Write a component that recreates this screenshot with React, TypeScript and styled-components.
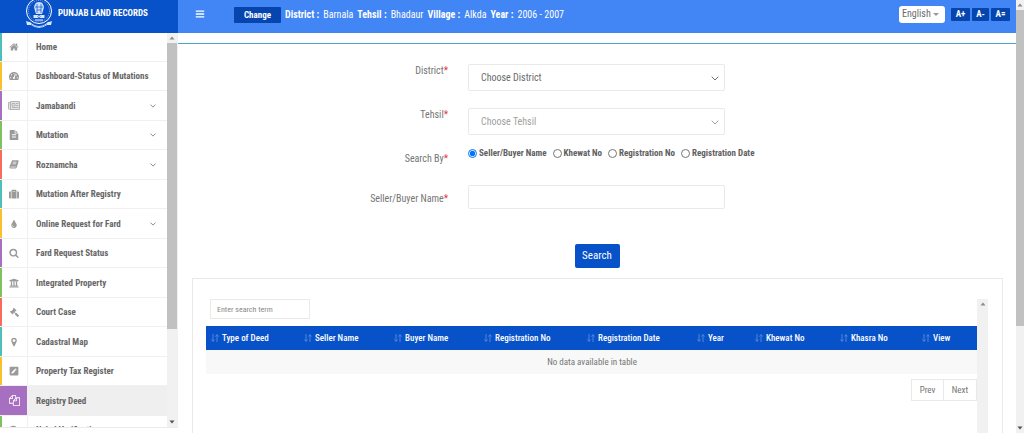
import React from "react";
import styled, { createGlobalStyle, css } from "styled-components";
import {
  FaTachometerAlt,
  FaSuitcase,
  FaTint,
  FaUniversity,
  FaGavel,
  FaPenSquare,
} from "react-icons/fa";

const GlobalStyle = createGlobalStyle`
  *, *::before, *::after { box-sizing: border-box; }
  body {
    margin: 0;
    background: #fff;
    color: #757575;
    font-family: "Roboto Condensed", "Liberation Sans Narrow", Roboto, sans-serif;
    font-size: 10px;
    line-height: 14px;
  }
  button, input, select { font: inherit; color: inherit; margin: 0; }
`;

const BLUE = "#0751c9";
const EDGES = ["#4dbfbb", "#fbc02d", "#a76fc0", "#7fc15e", "#f86c5b"];

const Shell = styled.div`
  display: flex;
  height: 100vh;
  overflow: hidden;
`;

const Sidebar = styled.aside`
  display: flex;
  flex-direction: column;
  flex: none;
  width: 178px;
  height: 100%;
  padding-bottom: 5px;
`;

const Brand = styled.div`
  display: flex;
  flex: none;
  align-items: center;
  gap: 5px;
  height: 33px;
  padding: 0 0 7px 25px;
  overflow: hidden;
  background: ${BLUE};
  color: #fff;
  font-size: 9px;
  font-weight: 700;
  white-space: nowrap;
`;

const Emblem = styled.svg`
  flex: none;
  width: 28px;
  height: 34px;
`;

const MenuArea = styled.div`
  display: flex;
  flex: 1;
  min-height: 0;
  border-right: 1px solid #f0f0f0;
  border-bottom: 1px solid #ebebeb;
`;

const Menu = styled.nav`
  flex: 1;
  overflow: hidden;
`;

const MenuLink = styled.a<{ $edge: string; $active?: boolean }>`
  display: flex;
  height: 29px;
  border-bottom: 1px solid #f0f0f0;
  color: #666;
  font-size: 9px;
  font-weight: 700;
  text-decoration: none;
  white-space: nowrap;
  background: ${(p) => (p.$active ? "#efefef" : "#fff")};

  &:nth-child(odd):not(:first-child) {
    height: 30px;
  }
  & > span:first-child {
    border-left: 2px solid ${(p) => p.$edge};
    ${(p) =>
      p.$active &&
      css`
        background: ${p.$edge};
        color: #fff;
      `}
  }
`;

const MenuIcon = styled.span`
  display: flex;
  flex: none;
  align-items: center;
  justify-content: center;
  width: 28px;
  padding-right: 1px;
  border-right: 1px solid #f0f0f0;
  color: #9a9a9a;
  font-size: 10px;
`;

const Gavel = styled(FaGavel)`
  transform: scaleX(-1);
`;

const MenuText = styled.span`
  flex: 1;
  align-self: center;
  padding-left: 8px;
`;

const Chevron = styled.svg`
  align-self: center;
  width: 6px;
  height: 6px;
  margin-right: 11px;
`;

const Track = styled.div<{ $w: number }>`
  display: flex;
  flex: none;
  flex-direction: column;
  align-items: center;
  width: ${(p) => p.$w}px;
  background: #f1f1f1;
`;

const Thumb = styled.div<{ $size: string }>`
  width: 100%;
  height: ${(p) => p.$size};
  background: #c1c1c1;
`;

const Arrow = styled.svg<{ $end?: boolean }>`
  flex: none;
  width: 6px;
  height: 10px;
  ${(p) => p.$end && "margin-top: auto; transform: rotate(180deg);"}
`;

const Main = styled.div`
  display: flex;
  flex: 1;
  flex-direction: column;
  min-width: 0;
`;

const Topbar = styled.header`
  display: flex;
  flex: none;
  align-items: center;
  height: 33px;
  padding: 0 6px 5px 17px;
  background: #4285f4;
  color: #fff;
`;

const IconButton = styled.button`
  display: flex;
  padding: 0;
  border: 0;
  background: none;
`;

const DarkButton = styled.button<{ $w: number }>`
  width: ${(p) => p.$w}px;
  height: 13px;
  padding: 0;
  border: 0;
  border-radius: 1px;
  background: #0645ae;
  color: #fff;
  font-size: 9px;
  font-weight: 700;
  line-height: 12px;
`;

const ChangeButton = styled(DarkButton)`
  height: 16px;
`;

const Place = styled.div`
  display: flex;
  flex: 1;
  align-items: center;
  gap: 4px;
  margin-left: 29px;
  padding-top: 2px;
  font-size: 10px;
  white-space: nowrap;
`;

const Language = styled.div`
  position: relative;
  width: 46px;
  height: 17px;
  margin-right: 6px;
  color: #6b6b6b;

  select {
    width: 100%;
    height: 100%;
    padding: 0 3px;
    border: 0;
    border-radius: 3px;
    background: #fff;
    appearance: none;
  }
  svg {
    position: absolute;
    top: 6px;
    right: 6px;
    width: 6px;
    height: 5px;
  }
`;

const TextSizes = styled.div`
  display: flex;
  gap: 2px;
`;

const Content = styled.main`
  flex: 1;
  min-height: 0;
  margin-top: 10px;
  overflow: hidden;
  border-top: 1px solid #4ba6cf;
`;

const Form = styled.form`
  padding-top: 20px;
`;

const Field = styled.div<{ $gap: number }>`
  display: grid;
  grid-template-columns: 270fr 257fr 271fr;
  column-gap: 20px;
  align-items: start;
  margin-bottom: ${(p) => p.$gap}px;
`;

const Caption = styled.label<{ $drop?: number }>`
  padding-top: ${(p) => p.$drop ?? 0}px;
  text-align: right;

  &::after {
    content: "*";
    color: #e53935;
  }
`;

const Select = styled.div<{ $muted?: boolean }>`
  position: relative;
  height: 27px;
  color: ${(p) => (p.$muted ? "#a0a0a0" : "#6b6b6b")};

  select {
    width: 100%;
    height: 100%;
    padding: 0 12px;
    border: 1px solid #e9e9e9;
    border-radius: 2px;
    background: #fff;
    appearance: none;
  }
  svg {
    position: absolute;
    top: 11px;
    right: 6px;
    width: 8px;
    height: 7px;
  }
`;

const Radios = styled.div`
  display: flex;
  grid-column: 2 / -1;
  gap: 6px;
  color: #5f5f5f;
  font-size: 9px;
  font-weight: 700;
  white-space: nowrap;

  label {
    display: flex;
    align-items: center;
    gap: 2px;
  }
  input {
    width: 9px;
    height: 9px;
  }
`;

const TextInput = styled.input`
  width: 100%;
  height: 24px;
  padding: 0 12px;
  border: 1px solid #e9e9e9;
  border-radius: 2px;
`;

const SearchButton = styled.button`
  display: block;
  width: 45px;
  height: 24px;
  margin: 35px auto 10px;
  padding: 0;
  border: 0;
  border-radius: 2px;
  background: ${BLUE};
  color: #fff;
  font-size: 11px;
`;

const Results = styled.section`
  display: flex;
  height: 400px;
  margin: 0 13px 0 14px;
  padding: 20px 14px 0 13px;
  border: 1px solid #e9e9e9;
`;

const ResultsBody = styled.div`
  flex: 1;
  min-width: 0;
`;

const Filter = styled.input`
  display: block;
  width: 100px;
  height: 20px;
  margin: 0 4px 7px;
  padding: 0 6px;
  border: 1px solid #e9e9e9;
  font-size: 8px;

  &::placeholder {
    color: #8a8a8a;
  }
`;

const Table = styled.table`
  width: 100%;
  border-collapse: collapse;
  table-layout: fixed;
  font-size: 9px;

  td {
    height: 24px;
    padding: 0;
    background: #f8f8f8;
    text-align: center;
  }
`;

const Th = styled.th<{ $w: number }>`
  width: ${(p) => p.$w}px;
  height: 24px;
  padding: 0 0 0 5px;
  background: ${BLUE};
  color: #fff;
  font-weight: 500;
  text-align: left;
  white-space: nowrap;

  svg {
    width: 8px;
    height: 8px;
    margin-right: 3px;
    vertical-align: -1px;
    opacity: 0.3;
  }
`;

const Pager = styled.div`
  display: flex;
  justify-content: flex-end;
  margin-top: 5px;

  button {
    width: 33px;
    height: 22px;
    padding: 0;
    border: 1px solid #e9e9e9;
    background: #fff;
    font-size: 9px;
  }
  button + button {
    width: 34px;
    margin-left: -1px;
  }
`;

const Glyph = ({ d, size = 10 }: { d: string; size?: number }) => (
  <svg viewBox="0 0 1792 1792" width={size} height={size} fill="currentColor" aria-hidden="true">
    <path d={d} />
  </svg>
);

const HOME =
  "M1472 992v480q0 26-19 45t-45 19h-384v-384h-256v384h-384q-26 0-45-19t-19-45v-480q0-1 .5-3t.5-3l575-474 575 474q1 2 1 6zm223-69l-62 74q-8 9-21 11h-3q-13 0-21-7l-692-577-692 577q-12 8-24 7-13-2-21-11l-62-74q-8-10-7-23.5t11-21.5l719-599q32-26 76-26t76 26l244 204v-195q0-14 9-23t23-9h192q14 0 23 9t9 23v408l219 182q10 8 11 21.5t-7 23.5z";
const FILE_TEXT =
  "M1596 476q14 14 28 36h-472v-472q22 14 36 28zm-476 164h544v1056q0 40-28 68t-68 28h-1344q-40 0-68-28t-28-68v-1600q0-40 28-68t68-28h800v544q0 40 28 68t68 28zm160 736v-64q0-14-9-23t-23-9h-704q-14 0-23 9t-9 23v64q0 14 9 23t23 9h704q14 0 23-9t9-23zm0-256v-64q0-14-9-23t-23-9h-704q-14 0-23 9t-9 23v64q0 14 9 23t23 9h704q14 0 23-9t9-23zm0-256v-64q0-14-9-23t-23-9h-704q-14 0-23 9t-9 23v64q0 14 9 23t23 9h704q14 0 23-9t9-23z";
const SEARCH =
  "M1216 832q0-185-131.5-316.5t-316.5-131.5-316.5 131.5-131.5 316.5 131.5 316.5 316.5 131.5 316.5-131.5 131.5-316.5zm512 832q0 52-38 90t-90 38q-54 0-90-38l-343-342q-179 124-399 124-143 0-273.5-55.5t-225-150-150-225-55.5-273.5 55.5-273.5 150-225 225-150 273.5-55.5 273.5 55.5 225 150 150 225 55.5 273.5q0 220-124 399l343 343q37 37 37 90z";
const MARKER =
  "M1152 640q0-106-75-181t-181-75-181 75-75 181 75 181 181 75 181-75 75-181zm256 0q0 109-33 179l-364 774q-16 33-47.5 52t-67.5 19-67.5-19-46.5-52l-365-774q-33-70-33-179 0-212 150-362t362-150 362 150 150 362z";
const FILES =
  "M1696 384q40 0 68 28t28 68v1216q0 40-28 68t-68 28h-960q-40 0-68-28t-28-68v-288h-544q-40 0-68-28t-28-68v-672q0-40 20-88t48-76l408-408q28-28 76-48t88-20h416q40 0 68 28t28 68v328q68-40 128-40h416zm-544 213l-299 299h299v-299zm-640-384l-299 299h299v-299zm196 647l316-316v-416h-384v416q0 40-28 68t-68 28h-416v640h512v-256q0-40 20-88t48-76zm956 804v-1152h-384v416q0 40-28 68t-68 28h-416v640h896z";
const BARS =
  "M1664 1344v128q0 26-19 45t-45 19h-1408q-26 0-45-19t-19-45v-128q0-26 19-45t45-19h1408q26 0 45 19t19 45zm0-512v128q0 26-19 45t-45 19h-1408q-26 0-45-19t-19-45v-128q0-26 19-45t45-19h1408q26 0 45 19t19 45zm0-512v128q0 26-19 45t-45 19h-1408q-26 0-45-19t-19-45v-128q0-26 19-45t45-19h1408q26 0 45 19t19 45z";

const Newspaper = () => (
  <svg viewBox="0 0 12 9" width="12" height="9" fill="none" stroke="#b4b4b4" aria-hidden="true">
    <path d="M2.500 0.500h9v8h-10q-1 0-1-1v-6h2z" fill="#e4e4e4" />
    <path d="M2.500 1v7M4 2.500h3v2.500h-3zM8 2.500h2.500M8 4.500h2.500M4 6.500h6.500" />
  </svg>
);

const Book = () => (
  <svg viewBox="0 0 10 9" width="10" height="9" aria-hidden="true">
    <path d="M3.200 0.300h5.800q0.800 0.200 0.600 1l-1.800 6q-0.300 1-1.300 1.200h-5q-1.300-0.200-1.100-1.700z" fill="currentColor" />
    <path d="M4 2.200h3.500M3.500 3.800h3.500M1.500 7h5.200" stroke="#fff" strokeWidth="0.700" />
  </svg>
);

const menu: { text: string; icon: React.ReactNode; open?: boolean; active?: boolean }[] = [
  { text: "Home", icon: <Glyph d={HOME} /> },
  { text: "Dashboard-Status of Mutations", icon: <FaTachometerAlt /> },
  { text: "Jamabandi", icon: <Newspaper />, open: true },
  { text: "Mutation", icon: <Glyph d={FILE_TEXT} />, open: true },
  { text: "Roznamcha", icon: <Book />, open: true },
  { text: "Mutation After Registry", icon: <FaSuitcase /> },
  { text: "Online Request for Fard", icon: <FaTint size={8} />, open: true },
  { text: "Fard Request Status", icon: <Glyph d={SEARCH} /> },
  { text: "Integrated Property", icon: <FaUniversity /> },
  { text: "Court Case", icon: <Gavel size={9} /> },
  { text: "Cadastral Map", icon: <Glyph d={MARKER} /> },
  { text: "Property Tax Register", icon: <FaPenSquare /> },
  { text: "Registry Deed", icon: <Glyph d={FILES} size={11} />, active: true },
  { text: "Nakal Verification", icon: <Glyph d={SEARCH} /> },
];

const columns: [string, number][] = [
  ["Type of Deed", 93],
  ["Seller Name", 90],
  ["Buyer Name", 90],
  ["Registration No", 103],
  ["Registration Date", 110],
  ["Year", 58],
  ["Khewat No", 85],
  ["Khasra No", 82],
  ["View", 61],
];

const Caret = () => (
  <path d="M1 2l3 3 3-3" fill="none" stroke="currentColor" strokeWidth="1" strokeLinecap="round" />
);

const ScrollArrow = ({ end }: { end?: boolean }) => (
  <Arrow $end={end} viewBox="0 0 6 10" aria-hidden="true">
    <path d="M0.5 6.5L3 3.5l2.500 3z" fill={end ? "#505050" : "#8a8a8a"} />
  </Arrow>
);

const StateEmblem = () => (
  <Emblem viewBox="0 0 28 34" fill="none" stroke="#fff" aria-hidden="true">
    <circle cx="14" cy="15" r="12.500" strokeWidth="1" />
    <circle cx="14" cy="15" r="10.500" strokeWidth="0.500" strokeDasharray="1 1" />
    <path d="M10 8q1-2 4-2t4 2l1 3-1 4-1 3h-6l-1-3-1-4z" fill="#cfe0ff" stroke="none" />
    <path d="M12 8v9M16 8v9M10 11h8M12 14h4" stroke={BLUE} strokeWidth="0.700" />
    <path d="M8.500 19h11v3h-11z" fill="#dbe7ff" stroke="none" />
    <circle cx="14" cy="20.500" r="1.200" stroke={BLUE} strokeWidth="0.600" />
    <path d="M10 24h8" strokeWidth="1" />
    <path d="M1 25q2 1 4 1 4 4 9 4t9-4q2 0 4-1l-1 4-4 0q-4 3-8 3t-8-3l-4 0z" fill="#dbe7ff" stroke="none" />
    <path d="M6 28q4 3 8 3t8-3" stroke={BLUE} strokeWidth="0.700" strokeDasharray="1 1" />
  </Emblem>
);

export default function App() {
  return (
    <>
      <GlobalStyle />
      <Shell>
        <Sidebar>
          <Brand>
            <StateEmblem />
            PUNJAB LAND RECORDS
          </Brand>
          <MenuArea>
            <Menu>
              {menu.map((item, i) => (
                <MenuLink href="#" key={item.text} $edge={EDGES[i % 5]} $active={item.active}>
                  <MenuIcon>{item.icon}</MenuIcon>
                  <MenuText>{item.text}</MenuText>
                  {item.open && (
                    <Chevron viewBox="0 0 8 7">
                      <Caret />
                    </Chevron>
                  )}
                </MenuLink>
              ))}
            </Menu>
            <Track $w={10}>
              <ScrollArrow />
              <Thumb $size="286px" />
              <ScrollArrow end />
            </Track>
          </MenuArea>
        </Sidebar>
        <Main>
          <Topbar>
            <IconButton aria-label="Toggle menu">
              <Glyph d={BARS} />
            </IconButton>
            <Place>
              <ChangeButton $w={47}>Change</ChangeButton>
              <b>District :</b> Barnala <b>Tehsil :</b> Bhadaur <b>Village :</b> Alkda <b>Year :</b> 2006 - 2007
            </Place>
            <Language>
              <select aria-label="Language">
                <option>English</option>
              </select>
              <svg viewBox="0 0 6 5" aria-hidden="true">
                <path d="M0 1h6L3 4z" fill="#999" />
              </svg>
            </Language>
            <TextSizes>
              <DarkButton $w={19}>A+</DarkButton>
              <DarkButton $w={17}>A-</DarkButton>
              <DarkButton $w={19}>A=</DarkButton>
            </TextSizes>
          </Topbar>
          <Content>
            <Form onSubmit={(e) => e.preventDefault()}>
              <Field $gap={17}>
                <Caption htmlFor="district">District</Caption>
                <Select>
                  <select id="district">
                    <option>Choose District</option>
                  </select>
                  <svg viewBox="0 0 8 7" aria-hidden="true">
                    <Caret />
                  </svg>
                </Select>
              </Field>
              <Field $gap={11}>
                <Caption htmlFor="tehsil">Tehsil</Caption>
                <Select $muted>
                  <select id="tehsil">
                    <option>Choose Tehsil</option>
                  </select>
                  <svg viewBox="0 0 8 7" aria-hidden="true">
                    <Caret />
                  </svg>
                </Select>
              </Field>
              <Field $gap={19}>
                <Caption as="span" $drop={6}>
                  Search By
                </Caption>
                <Radios role="radiogroup" aria-label="Search By">
                  {["Seller/Buyer Name", "Khewat No", "Registration No", "Registration Date"].map((r, i) => (
                    <label key={r}>
                      <input type="radio" name="by" defaultChecked={i === 0} />
                      {r}
                    </label>
                  ))}
                </Radios>
              </Field>
              <Field $gap={0}>
                <Caption htmlFor="name" $drop={7}>
                  Seller/Buyer Name
                </Caption>
                <TextInput id="name" type="text" />
              </Field>
              <SearchButton type="submit">Search</SearchButton>
            </Form>
            <Results>
              <ResultsBody>
                <Filter type="search" aria-label="Enter search term" placeholder="Enter search term" />
                <Table>
                  <thead>
                    <tr>
                      {columns.map(([name, w]) => (
                        <Th key={name} $w={w} scope="col">
                          <svg viewBox="0 0 8 8" fill="none" stroke="#fff" aria-hidden="true">
                            <path d="M2 0v7M0.500 5.500L2 7.500l1.500-2M6 8V1M4.500 2.500L6 0.500l1.500 2" />
                          </svg>
                          {name}
                        </Th>
                      ))}
                    </tr>
                  </thead>
                  <tbody>
                    <tr>
                      <td colSpan={9}>No data available in table</td>
                    </tr>
                  </tbody>
                </Table>
                <Pager>
                  <button>Prev</button>
                  <button>Next</button>
                </Pager>
              </ResultsBody>
              <Track $w={11}>
                <ScrollArrow />
              </Track>
            </Results>
          </Content>
        </Main>
        <Track $w={8}>
          <ScrollArrow />
          <Thumb $size="73%" />
          <ScrollArrow end />
        </Track>
      </Shell>
    </>
  );
}
